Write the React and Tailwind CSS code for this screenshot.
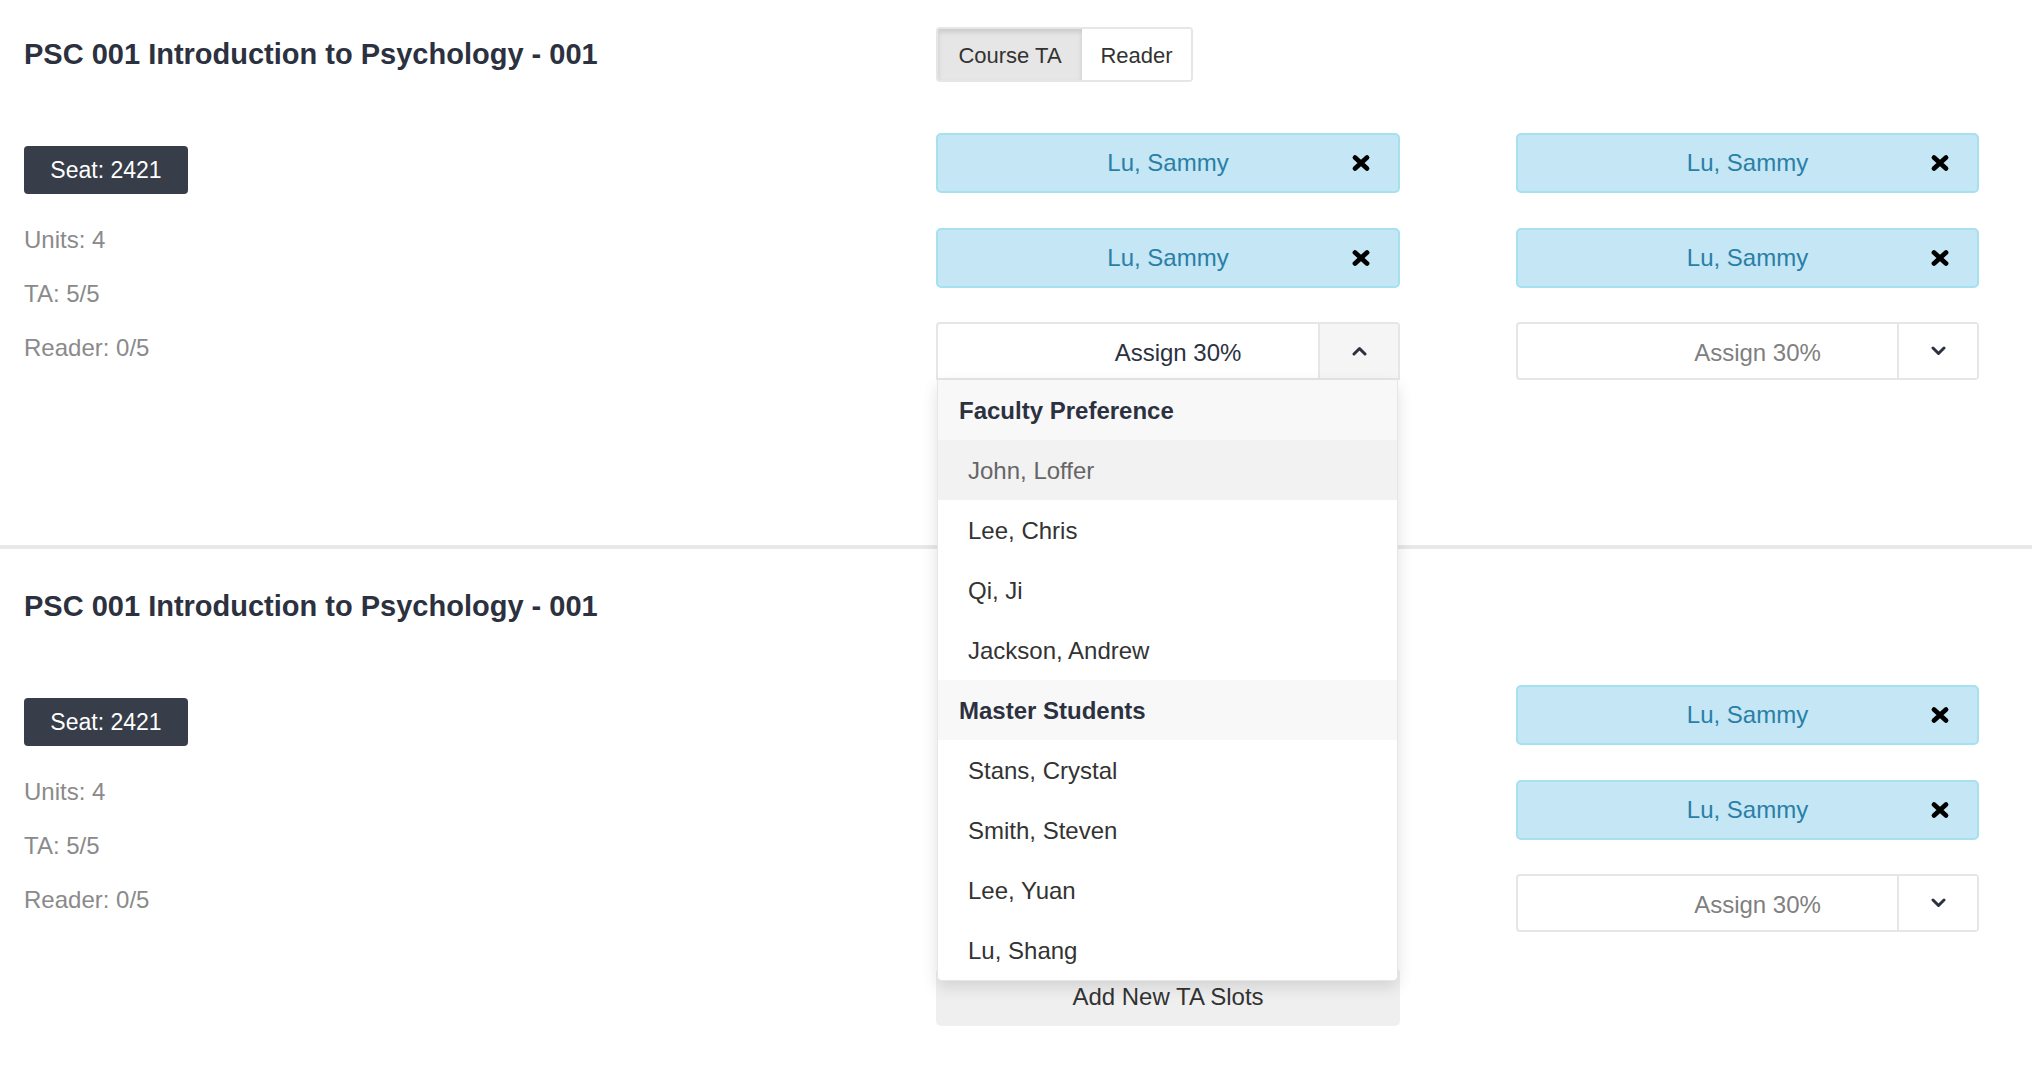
const font = { fontFamily: '"Liberation Sans", Arial, sans-serif' };

const facultyPrefs = ["John, Loffer", "Lee, Chris", "Qi, Ji", "Jackson, Andrew"];
const masterStudents = ["Stans, Crystal", "Smith, Steven", "Lee, Yuan", "Lu, Shang"];

function Cross() {
  return (
    <svg width="20" height="18" viewBox="0 0 20 18" className="block">
      <path d="M4 3.5 L16 14.5 M16 3.5 L4 14.5" stroke="#000" strokeWidth="4.8" strokeLinecap="round" fill="none" />
    </svg>
  );
}

function Chevron({ up }) {
  return (
    <svg width="15" height="10" viewBox="0 0 15 10" className="block">
      <path
        d={up ? "M2 8 L7.5 2.5 L13 8" : "M2 2 L7.5 7.5 L13 2"}
        stroke="#2c3140"
        strokeWidth="3"
        fill="none"
        strokeLinecap="round"
        strokeLinejoin="round"
      />
    </svg>
  );
}

function NameCard({ name, className = "" }) {
  return (
    <div className={`relative h-[60px] rounded-[5px] border-2 border-[#a6e1f0] bg-[#c4e6f5] flex items-center justify-center ${className}`}>
      <span className="text-[24px] text-[#2a7fa6]">{name}</span>
      <span className="absolute right-[27px] top-1/2 -translate-y-1/2">
        <Cross />
      </span>
    </div>
  );
}

function TypeToggle({ className = "" }) {
  return (
    <div className={`flex h-[55px] w-[257px] rounded-[4px] border-2 border-[#e6e6e6] overflow-hidden text-[22px] text-[#333] ${className}`}>
      <div className="w-[144px] flex items-center justify-center pt-px bg-[#e6e6e6] shadow-[inset_0_3px_5px_rgba(0,0,0,0.125)]">
        Course TA
      </div>
      <div className="flex-1 flex items-center justify-center pt-px bg-white">Reader</div>
    </div>
  );
}

function AssignDropdown({ open, className = "" }) {
  return (
    <div className={`relative ${className}`}>
      <div
        className={`flex h-[58px] border-2 border-[#e6e6e6] bg-white ${open ? "rounded-t-[4px]" : "rounded-[4px]"}`}
      >
        <div className={`flex-1 flex items-center justify-center pl-[100px] pt-[3px] text-[24px] ${open ? "text-[#2c3140]" : "text-[#808080]"}`}>
          Assign 30%
        </div>
        <div className={`w-[80px] border-l-2 border-[#e6e6e6] flex items-center justify-center ${open ? "bg-[#f5f5f5]" : "bg-white"}`}>
          <Chevron up={open} />
        </div>
      </div>
      {open && (
        <div className="absolute left-px top-full z-20 w-[461px] bg-white border border-t-0 border-[#e6e6e6] rounded-b-[5px] shadow-[0_6px_16px_rgba(0,0,0,0.12)] overflow-hidden">
          <div className="h-[60px] flex items-center pl-[21px] pt-px bg-[#f8f8f8] text-[24px] font-bold text-[#2c3140]">
            Faculty Preference
          </div>
          {facultyPrefs.map((name, i) => (
            <div
              key={name}
              className={`h-[60px] flex items-center pl-[30px] pt-px text-[24px] ${i === 0 ? "bg-[#f2f2f2] text-[#666]" : "text-[#333]"}`}
            >
              {name}
            </div>
          ))}
          <div className="h-[60px] flex items-center pl-[21px] pt-px bg-[#f8f8f8] text-[24px] font-bold text-[#2c3140]">
            Master Students
          </div>
          {masterStudents.map((name) => (
            <div key={name} className="h-[60px] flex items-center pl-[30px] pt-px text-[24px] text-[#333]">
              {name}
            </div>
          ))}
        </div>
      )}
    </div>
  );
}

function CourseSection({ first }) {
  // in the second section the first slot column sits under the open menu
  const hidden = first ? "" : "invisible";
  return (
    <div className={`flex pl-[24px] pr-[53px] ${first ? "h-[545px] pt-[27px]" : "pt-[30px] pb-[46px]"}`}>
      <div className="flex-1">
        <h2 className="mt-[10px] text-[29px] leading-[34px] font-bold text-[#2c3140]">
          PSC 001 Introduction to Psychology - 001
        </h2>
        <div className="mt-[75px] w-[164px] h-[48px] rounded-[4px] bg-[#373d49] text-white text-[23px] flex items-center justify-center">
          Seat: 2421
        </div>
        <div className="mt-[19px] text-[24px] text-[#8a8a8a]">
          <div className="h-[54px] leading-[54px]">Units: 4</div>
          <div className="h-[54px] leading-[54px]">TA: 5/5</div>
          <div className="h-[54px] leading-[54px]">Reader: 0/5</div>
        </div>
      </div>

      <div className="w-[464px]">
        <TypeToggle className={hidden} />
        <NameCard name="Lu, Sammy" className={`mt-[51px] ${hidden}`} />
        <NameCard name="Lu, Sammy" className={`mt-[35px] ${hidden}`} />
        <AssignDropdown open={first} className={`mt-[34px] ${hidden}`} />
        {!first && (
          <button className="mt-[36px] w-full h-[58px] rounded-[5px] bg-[#efefef] text-[24px] text-[#333]">
            Add New TA Slots
          </button>
        )}
      </div>

      <div className="w-[463px] ml-[116px]">
        <div className="h-[55px]" />
        <NameCard name="Lu, Sammy" className="mt-[51px]" />
        <NameCard name="Lu, Sammy" className="mt-[35px]" />
        <AssignDropdown open={false} className="mt-[34px]" />
      </div>
    </div>
  );
}

export default function App() {
  return (
    <div className="min-h-screen bg-white" style={font}>
      <CourseSection first />
      <div className="h-[4px] bg-[#e8e8e8]" />
      <CourseSection first={false} />
    </div>
  );
}
